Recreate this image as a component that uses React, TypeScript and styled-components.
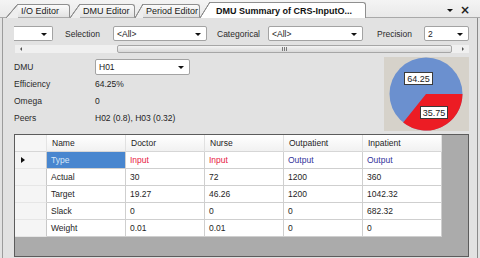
import styled, { createGlobalStyle } from 'styled-components';

const GlobalStyle = createGlobalStyle`
  html, body { margin: 0; padding: 0; }
  body {
    width: 480px;
    height: 258px;
    overflow: hidden;
    background: #e2e2e2;
    font-family: "Liberation Sans", Arial, sans-serif;
    font-size: 8.5px;
    color: #1e1e1e;
  }
`;

const columns = ['Name', 'Doctor', 'Nurse', 'Outpatient', 'Inpatient'];

const rows: string[][] = [
  ['Type', 'Input', 'Input', 'Output', 'Output'],
  ['Actual', '30', '72', '1200', '360'],
  ['Target', '19.27', '46.26', '1200', '1042.32'],
  ['Slack', '0', '0', '0', '682.32'],
  ['Weight', '0.01', '0.01', '0', '0'],
];

const tabs = [
  { label: 'I/O Editor', width: 52, slant: 12 },
  { label: 'DMU Editor', width: 55, slant: 10 },
  { label: 'Period Editor', width: 57, slant: 8 },
];

const App = () => {
  return (
    <Window>
      <GlobalStyle />
      <TabStrip>
        {tabs.map((t) => (
          <Tab key={t.label} $w={t.width} $slant={t.slant}>{t.label}</Tab>
        ))}
        <ActiveTab>DMU Summary of CRS-InputO...</ActiveTab>
        <StripControls>
          <DropArrow />
          <CloseX>×</CloseX>
        </StripControls>
      </TabStrip>

      <Body>
        <Toolbar>
          <Combo $w={39} $cut />
          <Label $ml={12} $w={48}>Selection</Label>
          <Combo $w={94}>&lt;All&gt;</Combo>
          <Label $ml={10} $w={51}>Categorical</Label>
          <Combo $w={95}>&lt;All&gt;</Combo>
          <Label $ml={14} $w={47}>Precision</Label>
          <Combo $w={45}>2</Combo>
        </Toolbar>

        <HScroll>
          <ScrollArrow $dir="left" />
          <Track>
            <Thumb>
              <Grip /><Grip /><Grip />
            </Thumb>
          </Track>
          <ScrollArrow $dir="right" />
        </HScroll>

        <InfoRow>
          <InfoGrid>
            <InfoLabel>DMU</InfoLabel>
            <div><Combo $w={95} $h={16}>H01</Combo></div>
            <InfoLabel>Efficiency</InfoLabel>
            <InfoValue>64.25%</InfoValue>
            <InfoLabel>Omega</InfoLabel>
            <InfoValue>0</InfoValue>
            <InfoLabel>Peers</InfoLabel>
            <InfoValue>H02 (0.8), H03 (0.32)</InfoValue>
          </InfoGrid>

          <PieBox>
            <svg width="85" height="74" viewBox="0 0 85 74">
              <circle cx="42" cy="37" r="36.5" fill="#6b90cf" />
              <path d="M42 37 L78.5 37 A36.5 36.5 0 0 1 19.2 65.5 Z" fill="#ec1c24" />
              <rect x="20.5" y="15.5" width="28" height="12" fill="#fff" stroke="#3a3a3a" />
              <text x="34.5" y="24.8" textAnchor="middle" fontSize="9" fill="#222" fontFamily="Liberation Sans, Arial, sans-serif">64.25</text>
              <rect x="36.5" y="49.5" width="27" height="12" fill="#fff" stroke="#3a3a3a" />
              <text x="50" y="58.8" textAnchor="middle" fontSize="9" fill="#222" fontFamily="Liberation Sans, Arial, sans-serif">35.75</text>
            </svg>
          </PieBox>
        </InfoRow>

        <GridFrame>
          <GridTable>
            <CornerCell />
            {columns.map((c) => (
              <HeaderCell key={c}>{c}</HeaderCell>
            ))}
            {rows.map((r, i) => (
              <Row key={r[0]}>
                <RowHeadCell>{i === 0 && <RowPointer />}</RowHeadCell>
                {r.map((v, j) => (
                  <Cell
                    key={j}
                    $tone={i === 0 ? (j === 0 ? 'selected' : v === 'Input' ? 'input' : 'output') : undefined}
                  >
                    {v}
                  </Cell>
                ))}
              </Row>
            ))}
          </GridTable>
        </GridFrame>
      </Body>
    </Window>
  );
};

const Window = styled.div`
  width: 480px;
  height: 258px;
  display: flex;
  flex-direction: column;
`;

const TabStrip = styled.div`
  height: 18px;
  box-sizing: border-box;
  display: flex;
  align-items: flex-end;
  padding-left: 6px;
  background: linear-gradient(#f4f4f4, #e9e9e9);
  border-bottom: 1px solid #a9a9a9;
`;

const Tab = styled.div<{ $w: number; $slant: number }>`
  position: relative;
  box-sizing: border-box;
  width: ${(p) => p.$w}px;
  height: 14px;
  margin-left: ${(p) => p.$slant}px;
  margin-bottom: -1px;
  padding-left: 3px;
  display: flex;
  align-items: center;
  white-space: nowrap;
  font-size: 9px;
  color: #1a1a1a;
  background: linear-gradient(#fbfbfb, #e2e2e2);
  border-top: 1px solid #8f8f8f;
  border-right: 1px solid #8f8f8f;
  border-bottom: 1px solid #a9a9a9;
  border-top-right-radius: 3px;

  &::before {
    content: '';
    position: absolute;
    left: -${(p) => p.$slant}px;
    top: -1px;
    bottom: -1px;
    width: ${(p) => p.$slant}px;
    background: linear-gradient(
      to bottom right,
      transparent calc(50% - 0.8px),
      #8f8f8f calc(50% - 0.3px),
      #8f8f8f calc(50% + 0.3px),
      #eeeeee calc(50% + 0.8px)
    );
  }
`;

const ActiveTab = styled.div`
  position: relative;
  box-sizing: border-box;
  width: 156px;
  height: 16px;
  margin-left: 10px;
  margin-bottom: -1px;
  padding-left: 6px;
  display: flex;
  align-items: center;
  white-space: nowrap;
  font-size: 9px;
  font-weight: bold;
  color: #111;
  background: #fff;
  border-top: 1px solid #8f8f8f;
  border-right: 1px solid #8f8f8f;
  border-top-right-radius: 3px;

  &::before {
    content: '';
    position: absolute;
    left: -10px;
    top: -1px;
    bottom: 0;
    width: 10px;
    background: linear-gradient(
      to bottom right,
      transparent calc(50% - 0.8px),
      #8f8f8f calc(50% - 0.3px),
      #8f8f8f calc(50% + 0.3px),
      #ffffff calc(50% + 0.8px)
    );
  }
`;

const StripControls = styled.div`
  margin-left: auto;
  align-self: center;
  display: flex;
  align-items: center;
  gap: 7px;
  padding-right: 10px;
  padding-top: 2px;
`;

const DropArrow = styled.span`
  width: 0;
  height: 0;
  border-left: 3px solid transparent;
  border-right: 3px solid transparent;
  border-top: 3px solid #111;
  margin-top: 1px;
`;

const CloseX = styled.span`
  font-family: "DejaVu Sans", sans-serif;
  font-size: 12px;
  font-weight: bold;
  line-height: 10px;
  color: #222;
`;

const Body = styled.div`
  flex: 1;
  display: flex;
  flex-direction: column;
  margin: 0 2px;
  padding: 0 8px 0 11px;
  border-left: 1px solid #9c9c9c;
  border-right: 1px solid #8a8a8a;
  min-height: 0;
`;

const Toolbar = styled.div`
  margin-top: 8px;
  height: 15px;
  display: flex;
  align-items: center;
  white-space: nowrap;
`;

const Label = styled.span<{ $ml: number; $w: number }>`
  margin-left: ${(p) => p.$ml}px;
  width: ${(p) => p.$w}px;
  color: #2a2a2a;
`;

const Combo = styled.div<{ $w: number; $h?: number; $cut?: boolean }>`
  position: relative;
  box-sizing: border-box;
  width: ${(p) => p.$w}px;
  height: ${(p) => p.$h ?? 15}px;
  display: flex;
  align-items: center;
  padding-left: 3px;
  background: #fff;
  border: 1px solid #a3a3a3;
  border-left: ${(p) => (p.$cut ? 'none' : '1px solid #a3a3a3')};
  border-radius: ${(p) => (p.$cut ? '0 2px 2px 0' : '2px')};
  color: #1a1a1a;

  &::after {
    content: '';
    position: absolute;
    right: 5px;
    top: 50%;
    margin-top: -1px;
    border-left: 3px solid transparent;
    border-right: 3px solid transparent;
    border-top: 3px solid #111;
  }
`;

const HScroll = styled.div`
  margin-top: 3px;
  height: 10px;
  margin-right: -1px;
  display: flex;
  align-items: stretch;
  background: #f0f0f0;
  box-sizing: border-box;
  border: 1px solid #e2e2e2;
`;

const ScrollArrow = styled.div<{ $dir: 'left' | 'right' }>`
  width: 12px;
  display: flex;
  align-items: center;
  justify-content: center;

  &::before {
    content: '';
    border-top: 2px solid transparent;
    border-bottom: 2px solid transparent;
    ${(p) => (p.$dir === 'left' ? 'border-right: 2px solid #555;' : 'border-left: 2px solid #555;')}
  }
`;

const Track = styled.div`
  flex: 1;
  display: flex;
  padding: 0 5px 0 90px;
`;

const Thumb = styled.div`
  flex: 1;
  display: flex;
  align-items: center;
  justify-content: center;
  gap: 1px;
  background: linear-gradient(#f4f4f4, #d9d9d9);
  border: 1px solid #a6a6a6;
  border-radius: 2px;
`;

const Grip = styled.span`
  width: 1px;
  height: 4px;
  background: #7a7a7a;
`;

const InfoRow = styled.div`
  margin-top: 3px;
  height: 74px;
  display: flex;
  justify-content: space-between;
  align-items: flex-start;
`;

const InfoGrid = styled.div`
  display: grid;
  grid-template-columns: 81px auto;
  grid-auto-rows: 17px;
  align-items: center;
  padding-top: 1px;
`;

const InfoLabel = styled.span`
  color: #2a2a2a;
`;

const InfoValue = styled.span`
  color: #1e1e1e;
`;

const PieBox = styled.div`
  width: 85px;
  height: 74px;
  background: #d6d2ca;
  display: flex;
`;

const GridFrame = styled.div`
  flex: 1;
  margin-top: 3px;
  margin-bottom: 1px;
  background: #ababab;
  border: 1px solid #5c5c5c;
  min-height: 0;
  overflow: hidden;
`;

const GridTable = styled.div`
  display: grid;
  grid-template-columns: 32px repeat(5, 79px);
  grid-auto-rows: 17px;
  width: max-content;
`;

const Row = styled.div`
  display: contents;
`;

const CornerCell = styled.div`
  background: #f6f6f6;
  border-right: 1px solid #e4e4e4;
  border-bottom: 1px solid #d6d6d6;
  box-sizing: border-box;
`;

const HeaderCell = styled.div`
  box-sizing: border-box;
  display: flex;
  align-items: center;
  padding-left: 5px;
  background: linear-gradient(#ffffff, #f1f1f1);
  border-right: 1px solid #e1e1e1;
  border-bottom: 1px solid #d6d6d6;
  color: #1e1e1e;
`;

const RowHeadCell = styled.div`
  box-sizing: border-box;
  display: flex;
  align-items: center;
  padding-left: 6px;
  background: #f5f5f5;
  border-right: 1px solid #c9c9c9;
  border-bottom: 1px solid #e6e6e6;
`;

const RowPointer = styled.span`
  width: 0;
  height: 0;
  border-top: 3.5px solid transparent;
  border-bottom: 3.5px solid transparent;
  border-left: 4px solid #111;
`;

const toneColor = {
  selected: '#d6e6f8',
  input: '#e8203f',
  output: '#33339a',
};

const Cell = styled.div<{ $tone?: 'selected' | 'input' | 'output' }>`
  box-sizing: border-box;
  display: flex;
  align-items: center;
  padding-left: 4px;
  background: ${(p) => (p.$tone === 'selected' ? '#4886cf' : '#ffffff')};
  color: ${(p) => (p.$tone ? toneColor[p.$tone] : '#1e1e1e')};
  border-right: 1px solid #cfcfcf;
  border-bottom: 1px solid #cfcfcf;
  white-space: nowrap;
`;

export default App;
